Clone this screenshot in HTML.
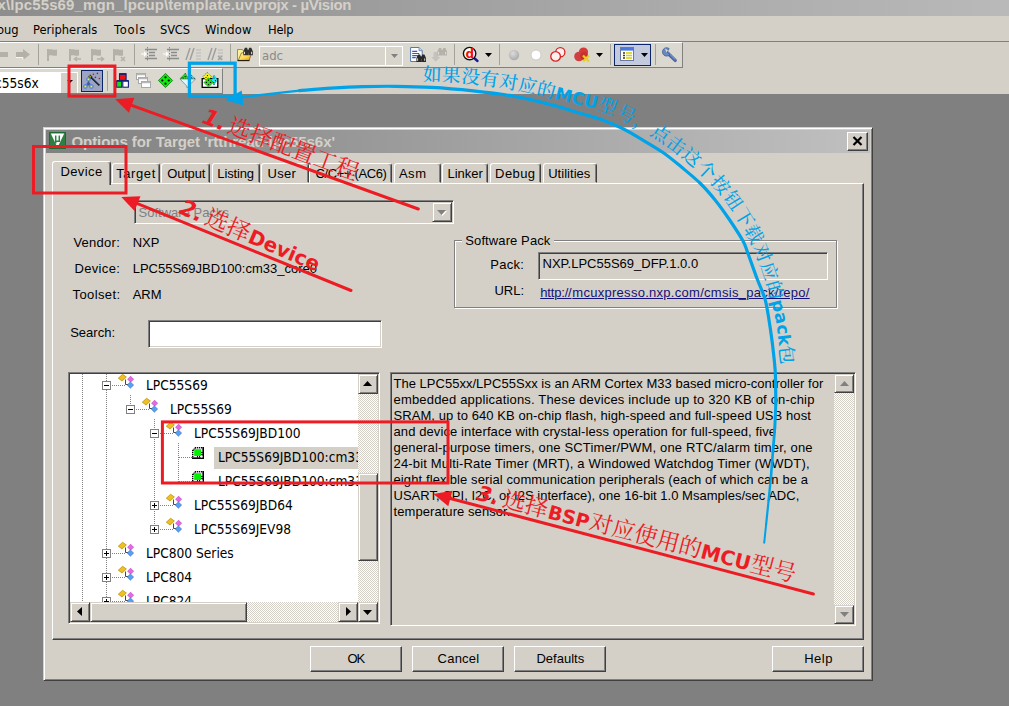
<!DOCTYPE html>
<html lang="zh">
<head>
<meta charset="utf-8">
<title>Options for Target</title>
<style>
html,body{margin:0;padding:0;}
body{width:1009px;height:706px;overflow:hidden;position:relative;background:#808080;font-family:"Liberation Sans","Noto Sans CJK SC",sans-serif;font-size:13px;color:#000;}
.abs{position:absolute;box-sizing:border-box;}
.f-lib{font-family:"Liberation Sans","Noto Sans CJK SC",sans-serif;}
.f-djv{font-family:"DejaVu Sans","Liberation Sans","Noto Sans CJK SC",sans-serif;}
.t{position:absolute;white-space:nowrap;line-height:1;transform-origin:0 0;}
.face{background:#d4d0c8;}
.sep{position:absolute;width:1px;background:#a5a29a;}
.raised{border:1px solid;border-color:#fff #404040 #404040 #fff;box-shadow:inset -1px -1px 0 #808080;background:#d4d0c8;}
.raised2{border:1px solid;border-color:#d4d0c8 #404040 #404040 #d4d0c8;box-shadow:inset 1px 1px 0 #fff,inset -1px -1px 0 #808080;background:#d4d0c8;}
.sunken{border:1px solid;border-color:#808080 #fff #fff #808080;box-shadow:inset 1px 1px 0 #404040,inset -1px -1px 0 #d4d0c8;}
.etched{border:1px solid;border-color:#808080 #fff #fff #808080;box-shadow:inset 1px 1px 0 #fff, 1px 1px 0 #fff;}
.tab{position:absolute;box-sizing:border-box;border:1px solid;border-color:#fff #404040 transparent #fff;border-radius:3px 3px 0 0;box-shadow:inset -1px 0 0 #808080;background:#d4d0c8;}
.dither{background-color:#e9e7e3;background-image:repeating-conic-gradient(#fff 0 25%,#d4d0c8 0 50%);background-size:2px 2px;}
.dis{color:#808080;}
svg{position:absolute;overflow:visible;}
</style>
</head>
<body>

<!-- main window -->
<div class="abs " style="left:0px;top:0px;width:1009px;height:16px;background:linear-gradient(to right,#8d8d8d,#b9b9b9);"></div>
<div class="t f-lib " style="left:-2.5px;top:-3.1px;font-size:15px;color:#d4d0c8;font-weight:bold;letter-spacing:0.11px;">x\lpc55s69_mgn_lpcup\template.uv</div>
<div class="t f-lib " style="left:253.6px;top:-3.1px;font-size:15px;color:#d4d0c8;font-weight:bold;letter-spacing:-0.40px;">projx - µVision</div>
<div class="abs face" style="left:0px;top:16px;width:1009px;height:78px;"></div>
<div class="t f-djv " style="left:-3.5px;top:23.8px;font-size:12px;transform:scaleX(0.96);">oug</div>
<div class="t f-djv " style="left:33.3px;top:23.8px;font-size:12px;transform:scaleX(0.96);letter-spacing:-0.01px;">Peripherals</div>
<div class="t f-djv " style="left:113.6px;top:23.8px;font-size:12px;transform:scaleX(0.96);letter-spacing:0.76px;">Tools</div>
<div class="t f-djv " style="left:159.8px;top:23.8px;font-size:12px;transform:scaleX(0.96);letter-spacing:-0.19px;">SVCS</div>
<div class="t f-djv " style="left:204.8px;top:23.8px;font-size:12px;transform:scaleX(0.96);letter-spacing:0.22px;">Window</div>
<div class="t f-djv " style="left:267.5px;top:23.8px;font-size:12px;transform:scaleX(0.96);letter-spacing:-0.20px;">Help</div>
<div class="abs " style="left:0px;top:41px;width:1009px;height:1px;background:#808080;"></div>
<div class="abs " style="left:-2px;top:42px;width:685px;height:25px;background:#dbd8d0;border-top:1px solid #fff;border-right:1px solid #808080;"></div>
<svg style="left:0px;top:49px" width="31" height="11" viewBox="0 0 31 11"><path d="M-4 3h12v5h-12z M16 3h7V0l7 5.5L23 11V8h-7z" fill="#b4b1a9"/><path d="M16 8.5h7V11" stroke="#fff" stroke-width="0.8" fill="none"/></svg>
<div class="sep" style="left:38px;top:44px;height:21px;"></div>
<svg style="left:45px;top:48px" width="16" height="14" viewBox="0 0 16 14"><path d="M2 1h2v12H2z" fill="#b4b1a9"/><path d="M4 1.5c3-1 4 1 8 0v6c-4 1-5-1-8 0z" fill="#b4b1a9"/></svg>
<svg style="left:67px;top:48px" width="16" height="14" viewBox="0 0 16 14"><path d="M2 1h2v12H2z" fill="#b4b1a9"/><path d="M4 1.5c3-1 4 1 8 0v6c-4 1-5-1-8 0z" fill="#b4b1a9"/><path d="M14 11H8M10 9l-2.5 2 2.5 2" stroke="#b4b1a9" stroke-width="1.6" fill="none"/></svg>
<svg style="left:89px;top:48px" width="16" height="14" viewBox="0 0 16 14"><path d="M2 1h2v12H2z" fill="#b4b1a9"/><path d="M4 1.5c3-1 4 1 8 0v6c-4 1-5-1-8 0z" fill="#b4b1a9"/><path d="M8 11h6M12 9l2.5 2-2.5 2" stroke="#b4b1a9" stroke-width="1.6" fill="none"/></svg>
<svg style="left:111px;top:48px" width="16" height="14" viewBox="0 0 16 14"><path d="M2 1h2v12H2z" fill="#b4b1a9"/><path d="M4 1.5c3-1 4 1 8 0v6c-4 1-5-1-8 0z" fill="#b4b1a9"/><path d="M10 9l4 4M14 9l-4 4" stroke="#b4b1a9" stroke-width="1.5" fill="none"/></svg>
<div class="sep" style="left:134px;top:44px;height:21px;"></div>
<svg style="left:141px;top:47px" width="17" height="15" viewBox="0 0 17 15"><path d="M4 2.5h12M8 5.5h6M8 8.5h6M4 11.5h12" stroke="#8c8c8c" stroke-width="1.6"/><path d="M6.5 0v15" stroke="#8c8c8c" stroke-width="1" stroke-dasharray="1.5 1.5"/><path d="M0 7h5M3 5l2 2-2 2" stroke="#fff" stroke-width="1.2" fill="none"/></svg>
<svg style="left:163px;top:47px" width="17" height="15" viewBox="0 0 17 15"><path d="M4 2.5h12M8 5.5h6M8 8.5h6M4 11.5h12" stroke="#8c8c8c" stroke-width="1.6"/><path d="M6.5 0v15" stroke="#8c8c8c" stroke-width="1" stroke-dasharray="1.5 1.5"/><path d="M0 7h5M3 5l2 2-2 2" stroke="#fff" stroke-width="1.2" fill="none"/></svg>
<svg style="left:186px;top:48px" width="16" height="13" viewBox="0 0 16 13"><path d="M4 0L0 12M8 0L4 12" stroke="#a0a0a0" stroke-width="1.5"/><path d="M10 2h5M10 5h5M10 8h5M10 11h5" stroke="#b8b8b8" stroke-width="1"/></svg>
<svg style="left:208px;top:48px" width="16" height="13" viewBox="0 0 16 13"><path d="M4 0L0 12M8 0L4 12" stroke="#a0a0a0" stroke-width="1.5"/><path d="M10 2h5M10 5h5M10 8h5M10 11h5" stroke="#b8b8b8" stroke-width="1"/><path d="M10 8l4 4M14 8l-4 4" stroke="#a0a0a0" stroke-width="1.3"/></svg>
<div class="sep" style="left:230px;top:44px;height:21px;"></div>
<svg style="left:237px;top:47px" width="16" height="15" viewBox="0 0 16 15"><defs><linearGradient id="fg" x1="0" y1="0" x2="0.9" y2="1"><stop offset="0" stop-color="#fff8a8"/><stop offset="0.6" stop-color="#fcd450"/><stop offset="1" stop-color="#e89808"/></linearGradient></defs><path d="M0.5 2.5h5l1 1.5h5.5v9.5H0.5z" fill="#fdf09a" stroke="#8a7840" stroke-width="0.8"/><path d="M1.2 13.4l3.3-7.6h10l-2.3 7.6z" fill="url(#fg)" stroke="#7a5a08" stroke-width="0.7"/><path d="M0.6 13.6h11.8" stroke="#201808" stroke-width="1.1"/><g transform="translate(6.3 0.8)"><path d="M1.6 0h2.2l0.9 3.2v4.3H0V3.6z M5.8 0h2.2l1.6 3.6v3.9H4.9V3.2z" fill="#303030"/><path d="M3 2h3.6v2.6H3z" fill="#303030"/><path d="M1.2 4v2.4M8.3 4v2.4" stroke="#f0f0f0" stroke-width="0.9"/></g></svg>
<div class="abs " style="left:259px;top:46px;width:144px;height:20px;border:1px solid #fff;background:#d8d5cd;"></div>
<div class="abs " style="left:385px;top:47px;width:1px;height:18px;background:#fff;"></div>
<div class="t f-djv " style="left:261.7px;top:50.2px;font-size:12.8px;color:#8a8a8a;transform:scaleX(0.915);">adc</div>
<svg style="left:391px;top:54px" width="7" height="4" viewBox="0 0 7 4"><path d="M0 0h7L3.5 4z" fill="#808080"/></svg>
<svg style="left:410px;top:47px" width="16" height="15" viewBox="0 0 16 15"><path d="M0.6 0.5h8.4l3.2 3.2v10.8H0.6z" fill="#fff" stroke="#5878b0" stroke-width="1"/><path d="M9 0.5v3.2h3.2" fill="#c8d8f0" stroke="#5878b0" stroke-width="0.8"/><path d="M2.2 4.4h5M2.2 6.5h7M2.2 8.6h5.5M2.2 10.6h3.5" stroke="#2858e0" stroke-width="1.1"/><g transform="translate(6.4 7.4)"><path d="M1.6 0h2.2l0.9 3.2v4.3H0V3.6z M5.8 0h2.2l1.6 3.6v3.9H4.9V3.2z" fill="#282828"/><path d="M3 2h3.6v2.6H3z" fill="#282828"/><path d="M1.2 4v2.4M8.3 4v2.4" stroke="#e8e8e8" stroke-width="0.9"/></g></svg>
<svg style="left:431px;top:47px" width="16" height="15" viewBox="0 0 16 15"><path d="M2.5 5h4.5v5h2.3L4.8 14.8 0.2 10h2.3z" fill="#c4c2bc"/><g transform="translate(6.4 1)"><path d="M1.6 0h2.2l0.9 3.2v4.3H0V3.6z M5.8 0h2.2l1.6 3.6v3.9H4.9V3.2z" fill="#b4b1a9"/><path d="M3 2h3.6v2.6H3z" fill="#b4b1a9"/><path d="M1.2 4v2.4M8.3 4v2.4" stroke="#e8e6e0" stroke-width="0.9"/></g></svg>
<div class="sep" style="left:454px;top:44px;height:21px;"></div>
<svg style="left:462px;top:46px" width="17" height="17" viewBox="0 0 17 17"><path d="M11.5 11.5l4 3.5" stroke="#1a1a9a" stroke-width="2.4" stroke-linecap="round"/><circle cx="7.6" cy="7.6" r="6.2" fill="#fff" stroke="#101010" stroke-width="1.4"/><text x="3.6" y="11.6" font-size="12" font-weight="bold" fill="#f01010" style="font-family:&quot;DejaVu Sans&quot;,&quot;Liberation Sans&quot;,sans-serif;">d</text></svg>
<svg style="left:485px;top:53px" width="7" height="4" viewBox="0 0 7 4"><path d="M0 0h7L3.5 4z" fill="#000"/></svg>
<div class="sep" style="left:499px;top:44px;height:21px;"></div>
<svg style="left:508px;top:49px" width="12" height="12" viewBox="0 0 12 12"><defs><radialGradient id="gg" cx="0.4" cy="0.35" r="0.7"><stop offset="0" stop-color="#dcdcdc"/><stop offset="1" stop-color="#a8a8a8"/></radialGradient></defs><circle cx="6" cy="6" r="5.2" fill="url(#gg)"/></svg>
<svg style="left:530px;top:49px" width="12" height="12" viewBox="0 0 12 12"><circle cx="6" cy="6" r="5" fill="#fff" stroke="#c8c8c8" stroke-width="0.9"/></svg>
<svg style="left:550px;top:47px" width="16" height="15" viewBox="0 0 16 15"><circle cx="10.3" cy="5.3" r="4.6" fill="#fff0f0" stroke="#d82020" stroke-width="1.3"/><circle cx="5.6" cy="9.4" r="4.8" fill="#fff0f0" stroke="#d82020" stroke-width="1.3"/></svg>
<svg style="left:574px;top:47px" width="17" height="15" viewBox="0 0 17 15"><circle cx="9.5" cy="5" r="4.6" fill="#d83838"/><circle cx="5" cy="9.5" r="4.8" fill="#d04040"/><circle cx="10" cy="9" r="4" fill="#c83030"/><path d="M9 8.5l6 6M15 8.5l-6 6" stroke="#e8d020" stroke-width="2.2"/></svg>
<svg style="left:596px;top:53px" width="7" height="4" viewBox="0 0 7 4"><path d="M0 0h7L3.5 4z" fill="#000"/></svg>
<div class="sep" style="left:610px;top:44px;height:21px;"></div>
<div class="abs " style="left:614px;top:44px;width:37px;height:22px;border:1.5px solid #0a246a;background:#c4cade;"></div>
<svg style="left:620px;top:47px" width="14" height="14" viewBox="0 0 14 14"><rect x="0.5" y="0.5" width="13" height="13" fill="#fff" stroke="#6878a8" stroke-width="1"/><rect x="1" y="1" width="12" height="2.6" fill="#4a78e0"/><path d="M3 6h2M3 8.5h2M3 11h2" stroke="#404000" stroke-width="1.4"/><path d="M6 6h6M6 8.5h6M6 11h6" stroke="#d8d000" stroke-width="1.6"/></svg>
<svg style="left:641px;top:53px" width="7" height="4" viewBox="0 0 7 4"><path d="M0 0h7L3.5 4z" fill="#000"/></svg>
<div class="sep" style="left:655px;top:44px;height:21px;"></div>
<svg style="left:662px;top:47px" width="16" height="15" viewBox="0 0 16 15"><path d="M4 4.5 L13.2 13.4" stroke="#4a68a8" stroke-width="3.4" stroke-linecap="round"/><path d="M5 4.6 L13 12.4" stroke="#8aa8d8" stroke-width="1" stroke-linecap="round"/><path d="M7.2 1.6 A4.2 4.2 0 1 0 8 7.4 L5 5z" fill="#6888c0" stroke="#3a5890" stroke-width="0.7"/><path d="M3 1.2l3 2.2-1.6 2z" fill="#dbd8d0"/></svg>
<div class="abs " style="left:-2px;top:68px;width:225px;height:26px;background:#dbd8d0;border-top:1px solid #fff;border-right:1px solid #808080;"></div>
<div class="abs " style="left:0px;top:93px;width:223px;height:1px;background:#808080;"></div>
<div class="abs " style="left:0px;top:67px;width:683px;height:1px;background:#808080;"></div>
<div class="abs " style="left:-2px;top:72px;width:80px;height:21px;background:#fff;border:1px solid #fff;"></div>
<div class="abs face" style="left:61px;top:73px;width:16px;height:20px;"></div>
<div class="t f-djv " style="left:-4.6px;top:76.5px;font-size:13.4px;transform:scaleX(0.915);">c55s6x</div>
<svg style="left:67px;top:80px" width="6" height="3" viewBox="0 0 6 3"><path d="M0 0h6L3 3z" fill="#000"/></svg>
<div class="abs " style="left:81px;top:70px;width:22px;height:22px;border:1.5px solid #0a246a;background:#9ca4c2;"></div>
<svg style="left:84px;top:72px" width="17" height="18" viewBox="0 0 17 18"><path d="M5.6 3.8L15.4 13.3" stroke="#101010" stroke-width="1.7"/><path d="M8 5.4L15.6 12.8" stroke="#5890f0" stroke-width="0.7"/><path d="M5.2 3.4l2.4 2.3" stroke="#101010" stroke-width="2.6"/><path d="M5.4 3.6l2 1.9" stroke="#f8f020" stroke-width="1.3" stroke-dasharray="0.9 0.5"/><g fill="#c81010"><circle cx="9.4" cy="2.2" r="0.8"/><circle cx="13.4" cy="1.4" r="0.8"/><circle cx="11.4" cy="5.4" r="0.8"/><circle cx="15.4" cy="6.5" r="0.8"/></g><path d="M4.5 8.5v2M4.5 12.5l-3 1.5M4.5 12.5l3 1.5M1.4 13v1M7.4 13v1M1.4 13h6" stroke="#3070f0" stroke-width="1" fill="none"/><rect x="3" y="5.9" width="3" height="3" rx="0.6" fill="#f8f020" stroke="#3070f0" stroke-width="1"/><rect x="-0.1" y="13" width="3" height="3" rx="0.6" fill="#f8f020" stroke="#3070f0" stroke-width="1"/><rect x="5.9" y="13" width="3" height="3" rx="0.6" fill="#f8f020" stroke="#3070f0" stroke-width="1"/><path d="M4.5 9.6l1.9 2-1.9 2-1.9-2z" fill="#405898"/></svg>
<div class="sep" style="left:107px;top:71px;height:20px;"></div>
<svg style="left:116px;top:73px" width="13" height="15" viewBox="0 0 13 15"><rect x="3.5" y="0.8" width="6.6" height="6.6" fill="#f01010" stroke="#10207a" stroke-width="1.1"/><rect x="0.6" y="8" width="5" height="6.2" fill="#10e010" stroke="#10207a" stroke-width="1.1"/><rect x="6.8" y="8" width="5.6" height="6.2" fill="#fff" stroke="#10207a" stroke-width="1.1"/><path d="M3.5 1h6.6M0.6 7.8h12" stroke="#10207a" stroke-width="1.6"/></svg>
<svg style="left:136px;top:73px" width="16" height="15" viewBox="0 0 16 15"><g fill="#fff" stroke="#a8a8a8" stroke-width="1"><rect x="0.5" y="0.5" width="9" height="6"/><rect x="2.5" y="4.5" width="9" height="6"/><rect x="5.5" y="8.5" width="9" height="6"/></g><path d="M1 1.5h8M3 5.5h8M6 9.5h8" stroke="#b8b8b8" stroke-width="1.6"/></svg>
<svg style="left:158px;top:73px" width="15" height="15" viewBox="0 0 15 15"><path d="M7.5 0.4L14.6 7.5 7.5 14.6 0.4 7.5z" fill="#10e810" stroke="#0a7a0a" stroke-width="0.8"/><g fill="#000"><circle cx="7.5" cy="4.3" r="1.1"/><circle cx="4.3" cy="7.5" r="1.1"/><circle cx="10.7" cy="7.5" r="1.1"/><circle cx="7.5" cy="10.7" r="1.1"/></g></svg>
<svg style="left:179px;top:73px" width="17" height="15" viewBox="0 0 17 15"><path d="M6.4 0.2L1 5.8H9.2z" fill="#10e810" stroke="#101010" stroke-width="0.7" stroke-dasharray="1 0.8"/><path d="M12.6 2.4L10.2 5.8H16.2z" fill="#20f0ff" stroke="#101010" stroke-width="0.7" stroke-dasharray="1 0.8"/><path d="M1 6h15.6L9.3 13v1.4H7.7V13z" fill="#d8f8ff" stroke="#707880" stroke-width="0.7"/><circle cx="6.2" cy="3.6" r="0.7" fill="#000"/><circle cx="4" cy="4.8" r="0.5" fill="#000"/><circle cx="12.6" cy="4.8" r="0.5" fill="#000"/></svg>
<svg style="left:201px;top:73px" width="18" height="15" viewBox="0 0 18 15"><path d="M1.2 5.6h15.6v8.8H1.2z" fill="#fff" stroke="#000" stroke-width="1.3"/><path d="M6.2 -0.6l4.4 4.4-4.4 4.4-4.4-4.4z" fill="#f4f420" stroke="#202000" stroke-width="0.6" stroke-dasharray="1 0.8"/><path d="M12.9 2.2l3.4 4-1.6 3.2-1.8 3-2.4-5.2z" fill="#10f0ff" stroke="#103038" stroke-width="0.6" stroke-dasharray="1 0.8"/><path d="M7.5 4.7l4.7 4.7-4.7 4.7-4.7-4.7z" fill="#20e810" stroke="#082808" stroke-width="0.6" stroke-dasharray="1 0.8"/><g fill="#000"><circle cx="7.5" cy="7.2" r="0.7"/><circle cx="5.4" cy="9.4" r="0.7"/><circle cx="9.6" cy="9.4" r="0.7"/><circle cx="7.5" cy="11.6" r="0.7"/><circle cx="5" cy="4.6" r="0.6"/><circle cx="6.4" cy="2.6" r="0.6"/><circle cx="13" cy="5" r="0.6"/><circle cx="14.4" cy="7.6" r="0.6"/><circle cx="12.8" cy="9.6" r="0.6"/></g></svg>
<!-- dialog -->
<div class="abs raised2" style="left:43px;top:127px;width:830px;height:554px;"></div>
<div class="abs " style="left:46px;top:130px;width:824px;height:22.5px;background:linear-gradient(to right,#808080,#c0c0c0);"></div>
<svg style="left:49px;top:132px" width="17" height="17" viewBox="0 0 17 17"><rect width="17" height="17" fill="#2f7f42"/><path d="M0.5 0.5h16v16h-16z" fill="none" stroke="#1f6a30"/><path d="M1.8 1.5H15.2L8.5 15.5z" fill="#fff"/><path d="M6.7 3.5v8M10.3 3.5v6.5M6.7 9.3h3.6" stroke="#2f7f42" stroke-width="1.5" fill="none"/></svg>
<div class="t f-lib " style="left:71.5px;top:134.1px;font-size:15px;color:#d4d0c8;font-weight:bold;letter-spacing:-0.07px;">Options for Target 'rtthread-lpc55s6x'</div>
<div class="abs raised" style="left:847px;top:132px;width:21px;height:19px;"></div>
<svg style="left:852px;top:136px" width="11" height="10" viewBox="0 0 11 10"><path d="M1.5 1 L9.5 9 M9.5 1 L1.5 9" stroke="#000" stroke-width="2.2" fill="none"/></svg>
<div class="abs " style="left:52px;top:183px;width:812px;height:457px;border:1px solid;border-color:#fff #404040 #404040 #fff;box-shadow:inset -1px -1px 0 #808080;"></div>
<div class="tab" style="left:112.0px;top:162.5px;width:47.5px;height:20.5px;"></div>
<div class="t f-lib " style="left:116.2px;top:167.0px;font-size:13px;letter-spacing:0.59px;">Target</div>
<div class="tab" style="left:160.7px;top:162.5px;width:49.7px;height:20.5px;"></div>
<div class="t f-lib " style="left:167.3px;top:167.0px;font-size:13px;letter-spacing:-0.21px;">Output</div>
<div class="tab" style="left:211.6px;top:162.5px;width:48.4px;height:20.5px;"></div>
<div class="t f-lib " style="left:217.3px;top:167.0px;font-size:13px;letter-spacing:-0.13px;">Listing</div>
<div class="tab" style="left:261.3px;top:162.5px;width:47.7px;height:20.5px;"></div>
<div class="t f-lib " style="left:267.6px;top:167.0px;font-size:13px;letter-spacing:0.25px;">User</div>
<div class="tab" style="left:309.4px;top:162.5px;width:83.0px;height:20.5px;"></div>
<div class="t f-lib " style="left:315.4px;top:167.0px;font-size:13px;letter-spacing:-0.36px;">C/C++ (AC6)</div>
<div class="tab" style="left:393.7px;top:162.5px;width:46.9px;height:20.5px;"></div>
<div class="t f-lib " style="left:398.9px;top:167.0px;font-size:13px;letter-spacing:0.55px;">Asm</div>
<div class="tab" style="left:441.9px;top:162.5px;width:46.3px;height:20.5px;"></div>
<div class="t f-lib " style="left:447.5px;top:167.0px;font-size:13px;letter-spacing:-0.02px;">Linker</div>
<div class="tab" style="left:489.6px;top:162.5px;width:51.8px;height:20.5px;"></div>
<div class="t f-lib " style="left:495.1px;top:167.0px;font-size:13px;letter-spacing:0.40px;">Debug</div>
<div class="tab" style="left:542.7px;top:162.5px;width:54.5px;height:20.5px;"></div>
<div class="t f-lib " style="left:548.2px;top:167.0px;font-size:13px;letter-spacing:0.03px;">Utilities</div>
<div class="tab" style="left:52px;top:160.5px;width:58.5px;height:24.5px;border-bottom:none;"></div>
<div class="t f-lib " style="left:60.4px;top:165.0px;font-size:13px;letter-spacing:0.41px;">Device</div>
<div class="abs sunken" style="left:134px;top:200px;width:320px;height:24px;background:#d4d0c8;"></div>
<div class="t f-lib dis" style="left:138.6px;top:205.7px;font-size:13px;">Software Packs</div>
<div class="abs raised2" style="left:432px;top:202px;width:20px;height:20px;"></div>
<svg style="left:437px;top:210px" width="10" height="6" viewBox="0 0 10 6"><path d="M1 1h9L5.5 6z" fill="#fff"/><path d="M0 0h9L4.5 5z" fill="#808080"/></svg>
<div class="t f-lib " style="left:73.4px;top:236.2px;font-size:13px;letter-spacing:0.26px;">Vendor:</div>
<div class="t f-lib " style="left:132.7px;top:236.2px;font-size:13px;">NXP</div>
<div class="t f-lib " style="left:74.5px;top:261.7px;font-size:13px;letter-spacing:0.33px;">Device:</div>
<div class="t f-lib " style="left:132.7px;top:261.7px;font-size:13px;">LPC55S69JBD100:cm33_core0</div>
<div class="t f-lib " style="left:72.5px;top:287.5px;font-size:13px;letter-spacing:0.39px;">Toolset:</div>
<div class="t f-lib " style="left:132.7px;top:287.5px;font-size:13px;">ARM</div>
<div class="abs " style="left:455px;top:241px;width:383px;height:68px;border:1px solid #fff;"></div>
<div class="abs " style="left:454px;top:240px;width:383px;height:68px;border:1px solid #808080;"></div>
<div class="abs face" style="left:462px;top:236px;width:92px;height:16px;"></div>
<div class="t f-lib " style="left:465.3px;top:234.0px;font-size:13px;letter-spacing:0.10px;">Software Pack</div>
<div class="t f-lib " style="left:490.2px;top:258.0px;font-size:13px;letter-spacing:0.27px;">Pack:</div>
<div class="abs sunken" style="left:538px;top:252px;width:290px;height:28px;background:#d4d0c8;"></div>
<div class="t f-lib " style="left:542.5px;top:257.3px;font-size:13px;">NXP.LPC55S69_DFP.1.0.0</div>
<div class="t f-lib" style="right:485.0px;top:283.6px;font-size:13px;">URL:</div>
<div class="t f-lib " style="left:540.2px;top:286.3px;font-size:13px;color:#14107a;text-decoration:underline;letter-spacing:-0.17px;">http://</div>
<div class="t f-lib " style="left:572.3px;top:286.3px;font-size:13px;color:#14107a;text-decoration:underline;letter-spacing:0.28px;">mcuxpresso.nxp.com/cmsis_pack/repo/</div>
<div class="t f-lib " style="left:70.2px;top:326.0px;font-size:13px;">Search:</div>
<div class="abs sunken" style="left:148px;top:320px;width:234px;height:28px;background:#fff;"></div>
<div class="abs sunken" style="left:68px;top:372px;width:312px;height:252px;background:#fff;"></div>
<div class="abs" style="left:70px;top:374px;width:288px;height:228px;overflow:hidden;">
<div class="abs" style="left:12px;top:0px;width:1px;height:228px;background-image:repeating-linear-gradient(to bottom,#808080 0 1px,transparent 1px 2px);"></div>
<div class="abs" style="left:36px;top:0px;width:1px;height:228px;background-image:repeating-linear-gradient(to bottom,#808080 0 1px,transparent 1px 2px);"></div>
<div class="abs" style="left:60px;top:21px;width:1px;height:10px;background-image:repeating-linear-gradient(to bottom,#808080 0 1px,transparent 1px 2px);"></div>
<div class="abs" style="left:84px;top:45px;width:1px;height:111px;background-image:repeating-linear-gradient(to bottom,#808080 0 1px,transparent 1px 2px);"></div>
<div class="abs" style="left:108px;top:69px;width:1px;height:39px;background-image:repeating-linear-gradient(to bottom,#808080 0 1px,transparent 1px 2px);"></div>
<div class="abs" style="left:36px;top:11px;width:19px;height:1px;background-image:repeating-linear-gradient(to right,#808080 0 1px,transparent 1px 2px);"></div>
<svg style="left:32.0px;top:7.0px" width="9" height="9" viewBox="0 0 9 9"><rect x="0.5" y="0.5" width="8" height="8" fill="#fff" stroke="#808080"/><path d="M2 4.5h5" stroke="#000" stroke-width="1"/></svg>
<svg style="left:48px;top:0px" width="16" height="15" viewBox="0 0 16 15"><path d="M7.5 5.5 v5 h3" fill="none" stroke="#404858" stroke-width="1"/><path d="M0.3 4.2 L4.6 0.3 L8.4 3 L4 7z" fill="#f0c020" stroke="#b08800" stroke-width="0.7"/><path d="M9.6 5.2 L12.6 2.2 L15.6 5.2 L12.6 8.2z" fill="#e868e8" stroke="#b040b0" stroke-width="0.6"/><path d="M9.2 11 L12.4 8 L15.6 11 L12.4 14.2z" fill="#58a0f0" stroke="#2868c8" stroke-width="0.6"/></svg>
<div class="t f-djv " style="left:76.0px;top:4.9px;font-size:13.4px;transform:scaleX(0.915);">LPC55S69</div>
<div class="abs" style="left:60px;top:35px;width:19px;height:1px;background-image:repeating-linear-gradient(to right,#808080 0 1px,transparent 1px 2px);"></div>
<svg style="left:56.0px;top:31.0px" width="9" height="9" viewBox="0 0 9 9"><rect x="0.5" y="0.5" width="8" height="8" fill="#fff" stroke="#808080"/><path d="M2 4.5h5" stroke="#000" stroke-width="1"/></svg>
<svg style="left:72px;top:24px" width="16" height="15" viewBox="0 0 16 15"><path d="M7.5 5.5 v5 h3" fill="none" stroke="#404858" stroke-width="1"/><path d="M0.3 4.2 L4.6 0.3 L8.4 3 L4 7z" fill="#f0c020" stroke="#b08800" stroke-width="0.7"/><path d="M9.6 5.2 L12.6 2.2 L15.6 5.2 L12.6 8.2z" fill="#e868e8" stroke="#b040b0" stroke-width="0.6"/><path d="M9.2 11 L12.4 8 L15.6 11 L12.4 14.2z" fill="#58a0f0" stroke="#2868c8" stroke-width="0.6"/></svg>
<div class="t f-djv " style="left:100.0px;top:28.9px;font-size:13.4px;transform:scaleX(0.915);">LPC55S69</div>
<div class="abs" style="left:84px;top:59px;width:19px;height:1px;background-image:repeating-linear-gradient(to right,#808080 0 1px,transparent 1px 2px);"></div>
<svg style="left:80.0px;top:55.0px" width="9" height="9" viewBox="0 0 9 9"><rect x="0.5" y="0.5" width="8" height="8" fill="#fff" stroke="#808080"/><path d="M2 4.5h5" stroke="#000" stroke-width="1"/></svg>
<svg style="left:96px;top:48px" width="16" height="15" viewBox="0 0 16 15"><path d="M7.5 5.5 v5 h3" fill="none" stroke="#404858" stroke-width="1"/><path d="M0.3 4.2 L4.6 0.3 L8.4 3 L4 7z" fill="#f0c020" stroke="#b08800" stroke-width="0.7"/><path d="M9.6 5.2 L12.6 2.2 L15.6 5.2 L12.6 8.2z" fill="#e868e8" stroke="#b040b0" stroke-width="0.6"/><path d="M9.2 11 L12.4 8 L15.6 11 L12.4 14.2z" fill="#58a0f0" stroke="#2868c8" stroke-width="0.6"/></svg>
<div class="t f-djv " style="left:124.0px;top:52.9px;font-size:13.4px;transform:scaleX(0.915);">LPC55S69JBD100</div>
<div class="abs" style="left:109px;top:83px;width:13px;height:1px;background-image:repeating-linear-gradient(to right,#808080 0 1px,transparent 1px 2px);"></div>
<div class="abs" style="left:144px;top:72.5px;width:200px;height:22px;background:#d4d0c8;"></div>
<svg style="left:122px;top:73px" width="12" height="12" viewBox="0 0 12 12"><path d="M3 0H12V12H0V3z" fill="#f4e8f4"/><g fill="#000"><rect x="3" y="0" width="1.2" height="1.4"/><rect x="0" y="3" width="1.4" height="1.2"/><rect x="5" y="0" width="1.2" height="1.4"/><rect x="0" y="5" width="1.4" height="1.2"/><rect x="7" y="0" width="1.2" height="1.4"/><rect x="0" y="7" width="1.4" height="1.2"/><rect x="9" y="0" width="1.2" height="1.4"/><rect x="0" y="9" width="1.4" height="1.2"/><rect x="1.6" y="1.6" width="1.2" height="1.2"/><rect x="0.6" y="2.6" width="1.2" height="1.2"/><rect x="2.6" y="0.4" width="1.2" height="1.2"/><rect x="10.4" y="0" width="1.6" height="12"/><rect x="0" y="10.4" width="12" height="1.6"/><rect x="8.6" y="5" width="2" height="1"/><rect x="8.6" y="7" width="2" height="1"/><rect x="5" y="8.6" width="1" height="2"/><rect x="7" y="8.6" width="1" height="2"/></g><rect x="2.2" y="2.2" width="7" height="6.8" fill="#00f000"/><rect x="9" y="9" width="1.5" height="1.5" fill="#fff"/></svg>
<div class="t f-djv " style="left:148.0px;top:76.9px;font-size:13.4px;transform:scaleX(0.915);">LPC55S69JBD100:cm33_core0</div>
<div class="abs" style="left:109px;top:107px;width:13px;height:1px;background-image:repeating-linear-gradient(to right,#808080 0 1px,transparent 1px 2px);"></div>
<svg style="left:122px;top:97px" width="12" height="12" viewBox="0 0 12 12"><path d="M3 0H12V12H0V3z" fill="#f4e8f4"/><g fill="#000"><rect x="3" y="0" width="1.2" height="1.4"/><rect x="0" y="3" width="1.4" height="1.2"/><rect x="5" y="0" width="1.2" height="1.4"/><rect x="0" y="5" width="1.4" height="1.2"/><rect x="7" y="0" width="1.2" height="1.4"/><rect x="0" y="7" width="1.4" height="1.2"/><rect x="9" y="0" width="1.2" height="1.4"/><rect x="0" y="9" width="1.4" height="1.2"/><rect x="1.6" y="1.6" width="1.2" height="1.2"/><rect x="0.6" y="2.6" width="1.2" height="1.2"/><rect x="2.6" y="0.4" width="1.2" height="1.2"/><rect x="10.4" y="0" width="1.6" height="12"/><rect x="0" y="10.4" width="12" height="1.6"/><rect x="8.6" y="5" width="2" height="1"/><rect x="8.6" y="7" width="2" height="1"/><rect x="5" y="8.6" width="1" height="2"/><rect x="7" y="8.6" width="1" height="2"/></g><rect x="2.2" y="2.2" width="7" height="6.8" fill="#00f000"/><rect x="9" y="9" width="1.5" height="1.5" fill="#fff"/></svg>
<div class="t f-djv " style="left:148.0px;top:100.9px;font-size:13.4px;transform:scaleX(0.915);">LPC55S69JBD100:cm33_core1</div>
<div class="abs" style="left:84px;top:131px;width:19px;height:1px;background-image:repeating-linear-gradient(to right,#808080 0 1px,transparent 1px 2px);"></div>
<svg style="left:80.0px;top:127.0px" width="9" height="9" viewBox="0 0 9 9"><rect x="0.5" y="0.5" width="8" height="8" fill="#fff" stroke="#808080"/><path d="M2 4.5h5" stroke="#000" stroke-width="1"/><path d="M4.5 2v5" stroke="#000" stroke-width="1"/></svg>
<svg style="left:96px;top:120px" width="16" height="15" viewBox="0 0 16 15"><path d="M7.5 5.5 v5 h3" fill="none" stroke="#404858" stroke-width="1"/><path d="M0.3 4.2 L4.6 0.3 L8.4 3 L4 7z" fill="#f0c020" stroke="#b08800" stroke-width="0.7"/><path d="M9.6 5.2 L12.6 2.2 L15.6 5.2 L12.6 8.2z" fill="#e868e8" stroke="#b040b0" stroke-width="0.6"/><path d="M9.2 11 L12.4 8 L15.6 11 L12.4 14.2z" fill="#58a0f0" stroke="#2868c8" stroke-width="0.6"/></svg>
<div class="t f-djv " style="left:124.0px;top:124.9px;font-size:13.4px;transform:scaleX(0.915);">LPC55S69JBD64</div>
<div class="abs" style="left:84px;top:155px;width:19px;height:1px;background-image:repeating-linear-gradient(to right,#808080 0 1px,transparent 1px 2px);"></div>
<svg style="left:80.0px;top:151.0px" width="9" height="9" viewBox="0 0 9 9"><rect x="0.5" y="0.5" width="8" height="8" fill="#fff" stroke="#808080"/><path d="M2 4.5h5" stroke="#000" stroke-width="1"/><path d="M4.5 2v5" stroke="#000" stroke-width="1"/></svg>
<svg style="left:96px;top:144px" width="16" height="15" viewBox="0 0 16 15"><path d="M7.5 5.5 v5 h3" fill="none" stroke="#404858" stroke-width="1"/><path d="M0.3 4.2 L4.6 0.3 L8.4 3 L4 7z" fill="#f0c020" stroke="#b08800" stroke-width="0.7"/><path d="M9.6 5.2 L12.6 2.2 L15.6 5.2 L12.6 8.2z" fill="#e868e8" stroke="#b040b0" stroke-width="0.6"/><path d="M9.2 11 L12.4 8 L15.6 11 L12.4 14.2z" fill="#58a0f0" stroke="#2868c8" stroke-width="0.6"/></svg>
<div class="t f-djv " style="left:124.0px;top:148.9px;font-size:13.4px;transform:scaleX(0.915);">LPC55S69JEV98</div>
<div class="abs" style="left:36px;top:179px;width:19px;height:1px;background-image:repeating-linear-gradient(to right,#808080 0 1px,transparent 1px 2px);"></div>
<svg style="left:32.0px;top:175.0px" width="9" height="9" viewBox="0 0 9 9"><rect x="0.5" y="0.5" width="8" height="8" fill="#fff" stroke="#808080"/><path d="M2 4.5h5" stroke="#000" stroke-width="1"/><path d="M4.5 2v5" stroke="#000" stroke-width="1"/></svg>
<svg style="left:48px;top:168px" width="16" height="15" viewBox="0 0 16 15"><path d="M7.5 5.5 v5 h3" fill="none" stroke="#404858" stroke-width="1"/><path d="M0.3 4.2 L4.6 0.3 L8.4 3 L4 7z" fill="#f0c020" stroke="#b08800" stroke-width="0.7"/><path d="M9.6 5.2 L12.6 2.2 L15.6 5.2 L12.6 8.2z" fill="#e868e8" stroke="#b040b0" stroke-width="0.6"/><path d="M9.2 11 L12.4 8 L15.6 11 L12.4 14.2z" fill="#58a0f0" stroke="#2868c8" stroke-width="0.6"/></svg>
<div class="t f-djv " style="left:76.0px;top:172.9px;font-size:13.4px;transform:scaleX(0.915);">LPC800 Series</div>
<div class="abs" style="left:36px;top:203px;width:19px;height:1px;background-image:repeating-linear-gradient(to right,#808080 0 1px,transparent 1px 2px);"></div>
<svg style="left:32.0px;top:199.0px" width="9" height="9" viewBox="0 0 9 9"><rect x="0.5" y="0.5" width="8" height="8" fill="#fff" stroke="#808080"/><path d="M2 4.5h5" stroke="#000" stroke-width="1"/><path d="M4.5 2v5" stroke="#000" stroke-width="1"/></svg>
<svg style="left:48px;top:192px" width="16" height="15" viewBox="0 0 16 15"><path d="M7.5 5.5 v5 h3" fill="none" stroke="#404858" stroke-width="1"/><path d="M0.3 4.2 L4.6 0.3 L8.4 3 L4 7z" fill="#f0c020" stroke="#b08800" stroke-width="0.7"/><path d="M9.6 5.2 L12.6 2.2 L15.6 5.2 L12.6 8.2z" fill="#e868e8" stroke="#b040b0" stroke-width="0.6"/><path d="M9.2 11 L12.4 8 L15.6 11 L12.4 14.2z" fill="#58a0f0" stroke="#2868c8" stroke-width="0.6"/></svg>
<div class="t f-djv " style="left:76.0px;top:196.9px;font-size:13.4px;transform:scaleX(0.915);">LPC804</div>
<div class="abs" style="left:36px;top:227px;width:19px;height:1px;background-image:repeating-linear-gradient(to right,#808080 0 1px,transparent 1px 2px);"></div>
<svg style="left:32.0px;top:223.0px" width="9" height="9" viewBox="0 0 9 9"><rect x="0.5" y="0.5" width="8" height="8" fill="#fff" stroke="#808080"/><path d="M2 4.5h5" stroke="#000" stroke-width="1"/><path d="M4.5 2v5" stroke="#000" stroke-width="1"/></svg>
<svg style="left:48px;top:216px" width="16" height="15" viewBox="0 0 16 15"><path d="M7.5 5.5 v5 h3" fill="none" stroke="#404858" stroke-width="1"/><path d="M0.3 4.2 L4.6 0.3 L8.4 3 L4 7z" fill="#f0c020" stroke="#b08800" stroke-width="0.7"/><path d="M9.6 5.2 L12.6 2.2 L15.6 5.2 L12.6 8.2z" fill="#e868e8" stroke="#b040b0" stroke-width="0.6"/><path d="M9.2 11 L12.4 8 L15.6 11 L12.4 14.2z" fill="#58a0f0" stroke="#2868c8" stroke-width="0.6"/></svg>
<div class="t f-djv " style="left:76.0px;top:220.9px;font-size:13.4px;transform:scaleX(0.915);">LPC824</div>
</div>
<div class="abs dither" style="left:358px;top:374px;width:20px;height:228px;"></div>
<div class="abs raised2" style="left:358px;top:374px;width:20px;height:20px;"></div>
<div class="abs raised2" style="left:358px;top:473px;width:20px;height:88px;"></div>
<div class="abs dither" style="left:70px;top:602px;width:308px;height:20px;"></div>
<div class="abs raised2" style="left:70px;top:602px;width:20px;height:20px;"></div>
<div class="abs raised2" style="left:90px;top:602px;width:157px;height:20px;"></div>
<div class="abs raised2" style="left:338px;top:602px;width:20px;height:20px;"></div>
<div class="abs raised2" style="left:358px;top:602px;width:20px;height:20px;"></div>
<svg style="left:363px;top:381px" width="9" height="5" viewBox="0 0 9 5"><path d="M0 5h9L4.5 0z" fill="#000"/></svg>
<svg style="left:362.5px;top:610px" width="9" height="5" viewBox="0 0 9 5"><path d="M0 0h9L4.5 5z" fill="#000"/></svg>
<svg style="left:77px;top:606.7px" width="5" height="9" viewBox="0 0 5 9"><path d="M5 0v9L0 4.5z" fill="#000"/></svg>
<svg style="left:345.5px;top:606.7px" width="5" height="9" viewBox="0 0 5 9"><path d="M0 0v9L5 4.5z" fill="#000"/></svg>
<div class="abs sunken" style="left:390px;top:372px;width:466px;height:254px;background:#d4d0c8;"></div>
<div class="t f-lib " style="left:393.5px;top:376.5px;font-size:13px;letter-spacing:0.02px;">The LPC55xx/LPC55Sxx is an ARM Cortex M33 based micro-controller for</div>
<div class="t f-lib " style="left:393.5px;top:392.5px;font-size:13px;letter-spacing:0.18px;">embedded applications. These devices include up to 320 KB of on-chip</div>
<div class="t f-lib " style="left:393.5px;top:408.5px;font-size:13px;letter-spacing:0.07px;">SRAM, up to 640 KB on-chip flash, high-speed and full-speed USB host</div>
<div class="t f-lib " style="left:393.5px;top:424.5px;font-size:13px;letter-spacing:0.10px;">and device interface with crystal-less operation for full-speed, five</div>
<div class="t f-lib " style="left:393.5px;top:440.5px;font-size:13px;letter-spacing:0.17px;">general-purpose timers, one SCTimer/PWM, one RTC/alarm timer, one</div>
<div class="t f-lib " style="left:393.5px;top:456.5px;font-size:13px;letter-spacing:0.16px;">24-bit Multi-Rate Timer (MRT), a Windowed Watchdog Timer (WWDT),</div>
<div class="t f-lib " style="left:393.5px;top:472.5px;font-size:13px;letter-spacing:0.11px;">eight flexible serial communication peripherals (each of which can be a</div>
<div class="t f-lib " style="left:393.5px;top:488.5px;font-size:13px;letter-spacing:0.01px;">USART, SPI, I2C, or I2S interface), one 16-bit 1.0 Msamples/sec ADC,</div>
<div class="t f-lib " style="left:393.5px;top:504.5px;font-size:13px;letter-spacing:0.07px;">temperature sensor.</div>
<div class="abs dither" style="left:834px;top:374px;width:20px;height:250px;"></div>
<div class="abs raised2" style="left:834px;top:374px;width:20px;height:19px;"></div>
<div class="abs raised2" style="left:834px;top:605px;width:20px;height:19px;"></div>
<svg style="left:839.5px;top:381px" width="9" height="5" viewBox="0 0 9 5"><path d="M0 5h9L4.5 0z" fill="#808080"/></svg>
<svg style="left:839.5px;top:612px" width="9" height="5" viewBox="0 0 9 5"><path d="M0 0h9L4.5 5z" fill="#808080"/></svg>
<div class="abs raised" style="left:310px;top:646px;width:92px;height:26px;"></div>
<div class="t f-lib " style="left:347.6px;top:651.9px;font-size:13px;letter-spacing:-1.28px;">OK</div>
<div class="abs raised" style="left:412px;top:646px;width:92px;height:26px;"></div>
<div class="t f-lib " style="left:437.6px;top:651.9px;font-size:13px;letter-spacing:0.21px;">Cancel</div>
<div class="abs raised" style="left:514px;top:646px;width:92px;height:26px;"></div>
<div class="t f-lib " style="left:536.4px;top:651.9px;font-size:13px;letter-spacing:0.02px;">Defaults</div>
<div class="abs raised" style="left:772px;top:646px;width:92px;height:26px;"></div>
<div class="t f-lib " style="left:804.2px;top:651.9px;font-size:13px;letter-spacing:0.49px;">Help</div>
<svg style="left:0;top:0" width="1009" height="706" viewBox="0 0 1009 706"><rect x="69" y="66" width="45.9" height="30.1" fill="none" stroke="#ed1c24" stroke-width="3"/>
<rect x="189.4" y="63.2" width="45.7" height="33.1" fill="none" stroke="#00a2e8" stroke-width="3.3"/>
<rect x="33.5" y="146.5" width="92.5" height="46.5" fill="none" stroke="#ed1c24" stroke-width="3"/>
<rect x="162.4" y="421.9" width="285.6" height="61.1" fill="none" stroke="#ed1c24" stroke-width="3"/>
<path d="M418.3 209.0 L131.7 105.3" stroke="#ed1c24" stroke-width="3" fill="none" stroke-linecap="round"/>
<path d="M115.2 99.3 L128.9 112.8 L134.4 97.7z" fill="#ed1c24"/>
<path d="M351.0 290.5 L137.5 203.6" stroke="#ed1c24" stroke-width="3" fill="none" stroke-linecap="round"/>
<path d="M121.3 197.0 L134.5 211.0 L140.5 196.2z" fill="#ed1c24"/>
<path d="M813.4 594.0 L450.3 498.5" stroke="#ed1c24" stroke-width="3" fill="none" stroke-linecap="round"/>
<path d="M433.4 494.1 L448.3 506.3 L452.4 490.8z" fill="#ed1c24"/>
<path id="bcurve" d="M242.5 97.7 C250.4 96.8 275.6 93.5 290.0 92.0 C304.4 90.5 312.7 89.5 329.0 88.6 C345.3 87.7 368.2 86.7 388.0 86.6 C407.8 86.5 432.7 87.3 448.0 88.0 C463.3 88.7 468.2 89.5 480.0 91.0 C491.8 92.5 502.7 93.7 519.0 97.0 C535.3 100.3 564.5 107.7 578.0 111.0 C591.5 114.3 592.5 114.3 600.0 117.0 C607.5 119.7 612.3 121.2 623.0 127.0 C633.7 132.8 649.3 141.0 664.0 152.0 C678.7 163.0 697.9 178.3 711.0 193.0 C724.1 207.7 734.6 225.7 742.4 240.0 C750.2 254.3 753.6 265.8 758.0 279.0 C762.4 292.2 766.7 308.8 769.0 319.0 C771.3 329.2 771.0 331.2 772.0 340.0 C773.0 348.8 774.6 360.2 775.3 372.0 C776.0 383.8 776.7 393.5 776.0 411.0 C775.3 428.5 773.0 455.0 771.0 477.0 C769.0 499.0 765.2 532.0 764.0 543.0" stroke="none" fill="none"/>
<path d="M243.0 97.0 C247.2 96.5 258.6 95.3 268.0 94.2 C277.4 93.1 294.2 91.2 299.4 90.6" stroke="#00a2e8" stroke-width="2.4" fill="none" stroke-linecap="round"/>
<path d="M299.4 90.6 C304.7 90.2 320.4 88.9 331.0 88.2 C341.6 87.5 352.2 86.9 363.0 86.6 C373.8 86.3 384.6 86.2 396.0 86.3 C407.4 86.4 418.7 86.5 431.6 87.3 C444.5 88.0 459.4 89.3 473.3 90.8 C487.2 92.3 501.5 94.0 514.9 96.4 C528.3 98.8 543.3 102.7 553.8 105.4 C564.2 108.1 569.7 110.2 577.6 112.5 C585.5 114.8 593.7 116.7 601.4 119.5 C609.1 122.3 617.6 126.2 624.0 129.3 C630.4 132.5 633.5 134.5 640.0 138.4 C646.5 142.3 656.1 147.7 663.0 152.5 C669.9 157.3 675.2 161.9 681.4 167.0 C687.5 172.1 694.3 177.6 699.9 183.0 C705.5 188.4 710.0 193.7 714.9 199.7 C719.8 205.7 724.3 212.1 729.0 219.0 C733.7 225.9 739.9 235.3 743.0 241.0 C746.1 246.7 745.4 246.6 747.8 253.0 C750.2 259.4 754.5 271.9 757.4 279.5 C760.2 287.1 763.0 291.8 764.9 298.5 C766.8 305.2 767.7 311.8 769.0 320.0 C770.3 328.2 771.9 339.2 772.9 348.0 C773.9 356.8 774.8 363.4 775.3 372.7 C775.8 382.0 775.7 398.8 775.8 404.0" stroke="#00a2e8" stroke-width="3.2" fill="none" stroke-linecap="round"/>
<path d="M775.8 404L774.8 428" stroke="#00a2e8" stroke-width="3.0" fill="none" stroke-linecap="round"/>
<path d="M774.8 428L772.9 452" stroke="#00a2e8" stroke-width="2.8" fill="none" stroke-linecap="round"/>
<path d="M772.9 452L771 476.4" stroke="#00a2e8" stroke-width="2.6" fill="none" stroke-linecap="round"/>
<path d="M771 476.4L768.6 500.5" stroke="#00a2e8" stroke-width="2.4" fill="none" stroke-linecap="round"/>
<path d="M768.6 500.5L766.1 524.6" stroke="#00a2e8" stroke-width="2.2" fill="none" stroke-linecap="round"/>
<path d="M766.1 524.6L764.2 542.7" stroke="#00a2e8" stroke-width="2.0" fill="none" stroke-linecap="round"/>
<path d="M225.1 100.1 L241.7 90.4 L243.5 105.2z" fill="#00a2e8"/>
<text transform="translate(201.1 122.6) rotate(20.6)" fill="#ed1c24" style="font-family:&quot;Liberation Serif&quot;,&quot;Noto Serif CJK SC&quot;,serif;"><tspan x="0" font-size="22" style="font-family:&quot;DejaVu Sans&quot;,&quot;Liberation Sans&quot;,sans-serif;font-weight:bold;font-style:italic;">1.</tspan><tspan x="26.5" font-size="23" style="">选择配置工程</tspan></text>
<text transform="translate(178.1 213) rotate(23)" fill="#ed1c24" style="font-family:&quot;Liberation Serif&quot;,&quot;Noto Serif CJK SC&quot;,serif;"><tspan x="0" font-size="22" style="font-family:&quot;DejaVu Sans&quot;,&quot;Liberation Sans&quot;,sans-serif;font-weight:bold;font-style:italic;">2.</tspan><tspan x="27" font-size="23.5" style="">选择</tspan><tspan x="74.5" font-size="20" style="font-family:&quot;DejaVu Sans&quot;,&quot;Liberation Sans&quot;,sans-serif;font-weight:bold;">Device</tspan></text>
<text transform="translate(475.5 499.5) rotate(14.6)" fill="#ed1c24" style="font-family:&quot;Liberation Serif&quot;,&quot;Noto Serif CJK SC&quot;,serif;"><tspan x="0" font-size="21" style="font-family:&quot;DejaVu Sans&quot;,&quot;Liberation Sans&quot;,sans-serif;font-weight:bold;font-style:italic;">3.</tspan><tspan x="26.5" font-size="23" style="">选择</tspan><tspan x="73.5" font-size="19" style="font-family:&quot;DejaVu Sans&quot;,&quot;Liberation Sans&quot;,sans-serif;font-weight:bold;">BSP</tspan><tspan x="116.5" font-size="23" style="">对应使用的</tspan><tspan x="231.5" font-size="20" style="font-family:&quot;DejaVu Sans&quot;,&quot;Liberation Sans&quot;,sans-serif;font-weight:bold;">MCU</tspan><tspan x="282.5" font-size="23" style="letter-spacing:0.3px;">型号</tspan></text>
<text fill="#00a2e8" font-size="18.5" style="font-family:&quot;Liberation Serif&quot;,&quot;Noto Serif CJK SC&quot;,serif;font-weight:500;" dy="-6.3"><textPath href="#bcurve" startOffset="180.5"><tspan style="letter-spacing:0.3px">如果没有对应的</tspan><tspan style="font-family:&quot;DejaVu Sans&quot;,&quot;Liberation Sans&quot;,sans-serif;font-weight:bold;" font-size="17">MCU</tspan><tspan style="letter-spacing:0.42px">型号，点击这个按钮下载对应的</tspan><tspan style="font-family:&quot;DejaVu Sans&quot;,&quot;Liberation Sans&quot;,sans-serif;font-weight:bold;" font-size="17">pack</tspan>包</textPath></text></svg>
</body>
</html>
